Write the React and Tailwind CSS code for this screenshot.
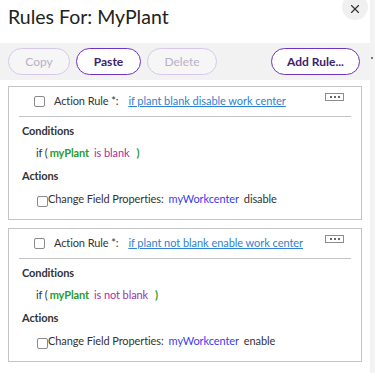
import { X } from 'lucide-react';

const rules = [
  { name: 'if plant blank disable work center', cond: 'is blank', action: 'disable' },
  { name: 'if plant not blank enable work center', cond: 'is not blank', action: 'enable' },
];

const Box = ({ className = '' }) => (
  <span className={`inline-block w-[11px] h-[11px] border border-[#8a8a8a] rounded-[2px] bg-white ${className}`} />
);

const RuleCard = ({ rule }) => (
  <div className="mx-2 border border-[#c4c4c4] bg-white text-[11px] tracking-[-0.1px] text-[#333]">
    <div className="relative h-[29px] flex items-center pl-[25px]">
      <Box />
      <span className="ml-[9px]">Action Rule *:</span>
      <a className="ml-[10px] text-[#2f7fd3] underline tracking-[-0.05px]">{rule.name}</a>
      <span className="absolute right-[17px] top-[6px] w-[19px] h-[8px] border border-[#8c8c8c] flex items-center justify-center gap-[2px]">
        <i className="w-[2px] h-[2px] bg-[#666]" />
        <i className="w-[2px] h-[2px] bg-[#666]" />
        <i className="w-[2px] h-[2px] bg-[#666]" />
      </span>
    </div>
    <div className="mx-[10px] border-t border-[#c4c4c4]" />
    <div className="px-[13px] pt-[4px] pb-[8px]">
      <div className="font-bold h-[21px] flex items-center">Conditions</div>
      <div className="h-[23px] flex items-center pl-[14px]">
        <span>if (</span>
        <span className="ml-[2px] font-bold text-[#2a9a2a]">myPlant</span>
        <span className="ml-[5px] text-[#a032a8]">{rule.cond}</span>
        <span className="ml-[7px] text-[#2a9a2a] font-bold">)</span>
      </div>
      <div className="font-bold h-[23px] flex items-center">Actions</div>
      <div className="h-[23px] flex items-center pl-[15px]">
        <Box className="mt-[4px]" />
        <span>Change Field Properties:</span>
        <span className="ml-[5px] text-[#3b3bf0]">myWorkcenter</span>
        <span className="ml-[5px]">{rule.action}</span>
      </div>
    </div>
  </div>
);

export default function App() {
  return (
    <div className="w-[375px] h-[373px] bg-white flex overflow-hidden" style={{ fontFamily: 'Lato, "Liberation Sans", sans-serif' }}>
      <div className="w-[370px] relative">
        <div className="h-[43px] px-2 pt-[3px]">
          <h1 className="text-[19.5px] text-[#222] font-normal leading-[28px]">Rules For: MyPlant</h1>
        </div>
        <button className="absolute right-[2px] top-[-6px] w-[26px] h-[26px] rounded-full bg-[#f0f0f0] flex items-center justify-center">
          <X size={14} strokeWidth={2} className="text-[#333] mt-[4px]" />
        </button>
        <div className="h-[37px] bg-[#f2f2f2] flex items-center px-2 gap-[6px] text-[12px] font-bold">
          <button className="w-[62px] h-[27px] rounded-full border border-[#d6c8ef] text-[#b9b0c8] font-normal bg-white/30">Copy</button>
          <button className="w-[65px] h-[27px] rounded-full border-[1.5px] border-[#6f33c2] text-[#3a2170] bg-white">Paste</button>
          <button className="w-[70px] h-[27px] rounded-full border border-[#d6c8ef] text-[#b9b0c8] font-normal bg-white/30">Delete</button>
          <button className="ml-auto mr-[2px] w-[89px] h-[27px] rounded-full border-[1.5px] border-[#6f33c2] text-[#3a2170] bg-white">Add Rule...</button>
        </div>
        <div className="pt-[6px] flex flex-col gap-[8px]">
          {rules.map((r) => (
            <RuleCard key={r.name} rule={r} />
          ))}
        </div>
      </div>
      <div className="w-[5px] bg-[#f3f3f3] relative">
        <span className="absolute left-[1px] top-[57px] w-[2px] h-[2px] bg-[#777]" />
      </div>
    </div>
  );
}
